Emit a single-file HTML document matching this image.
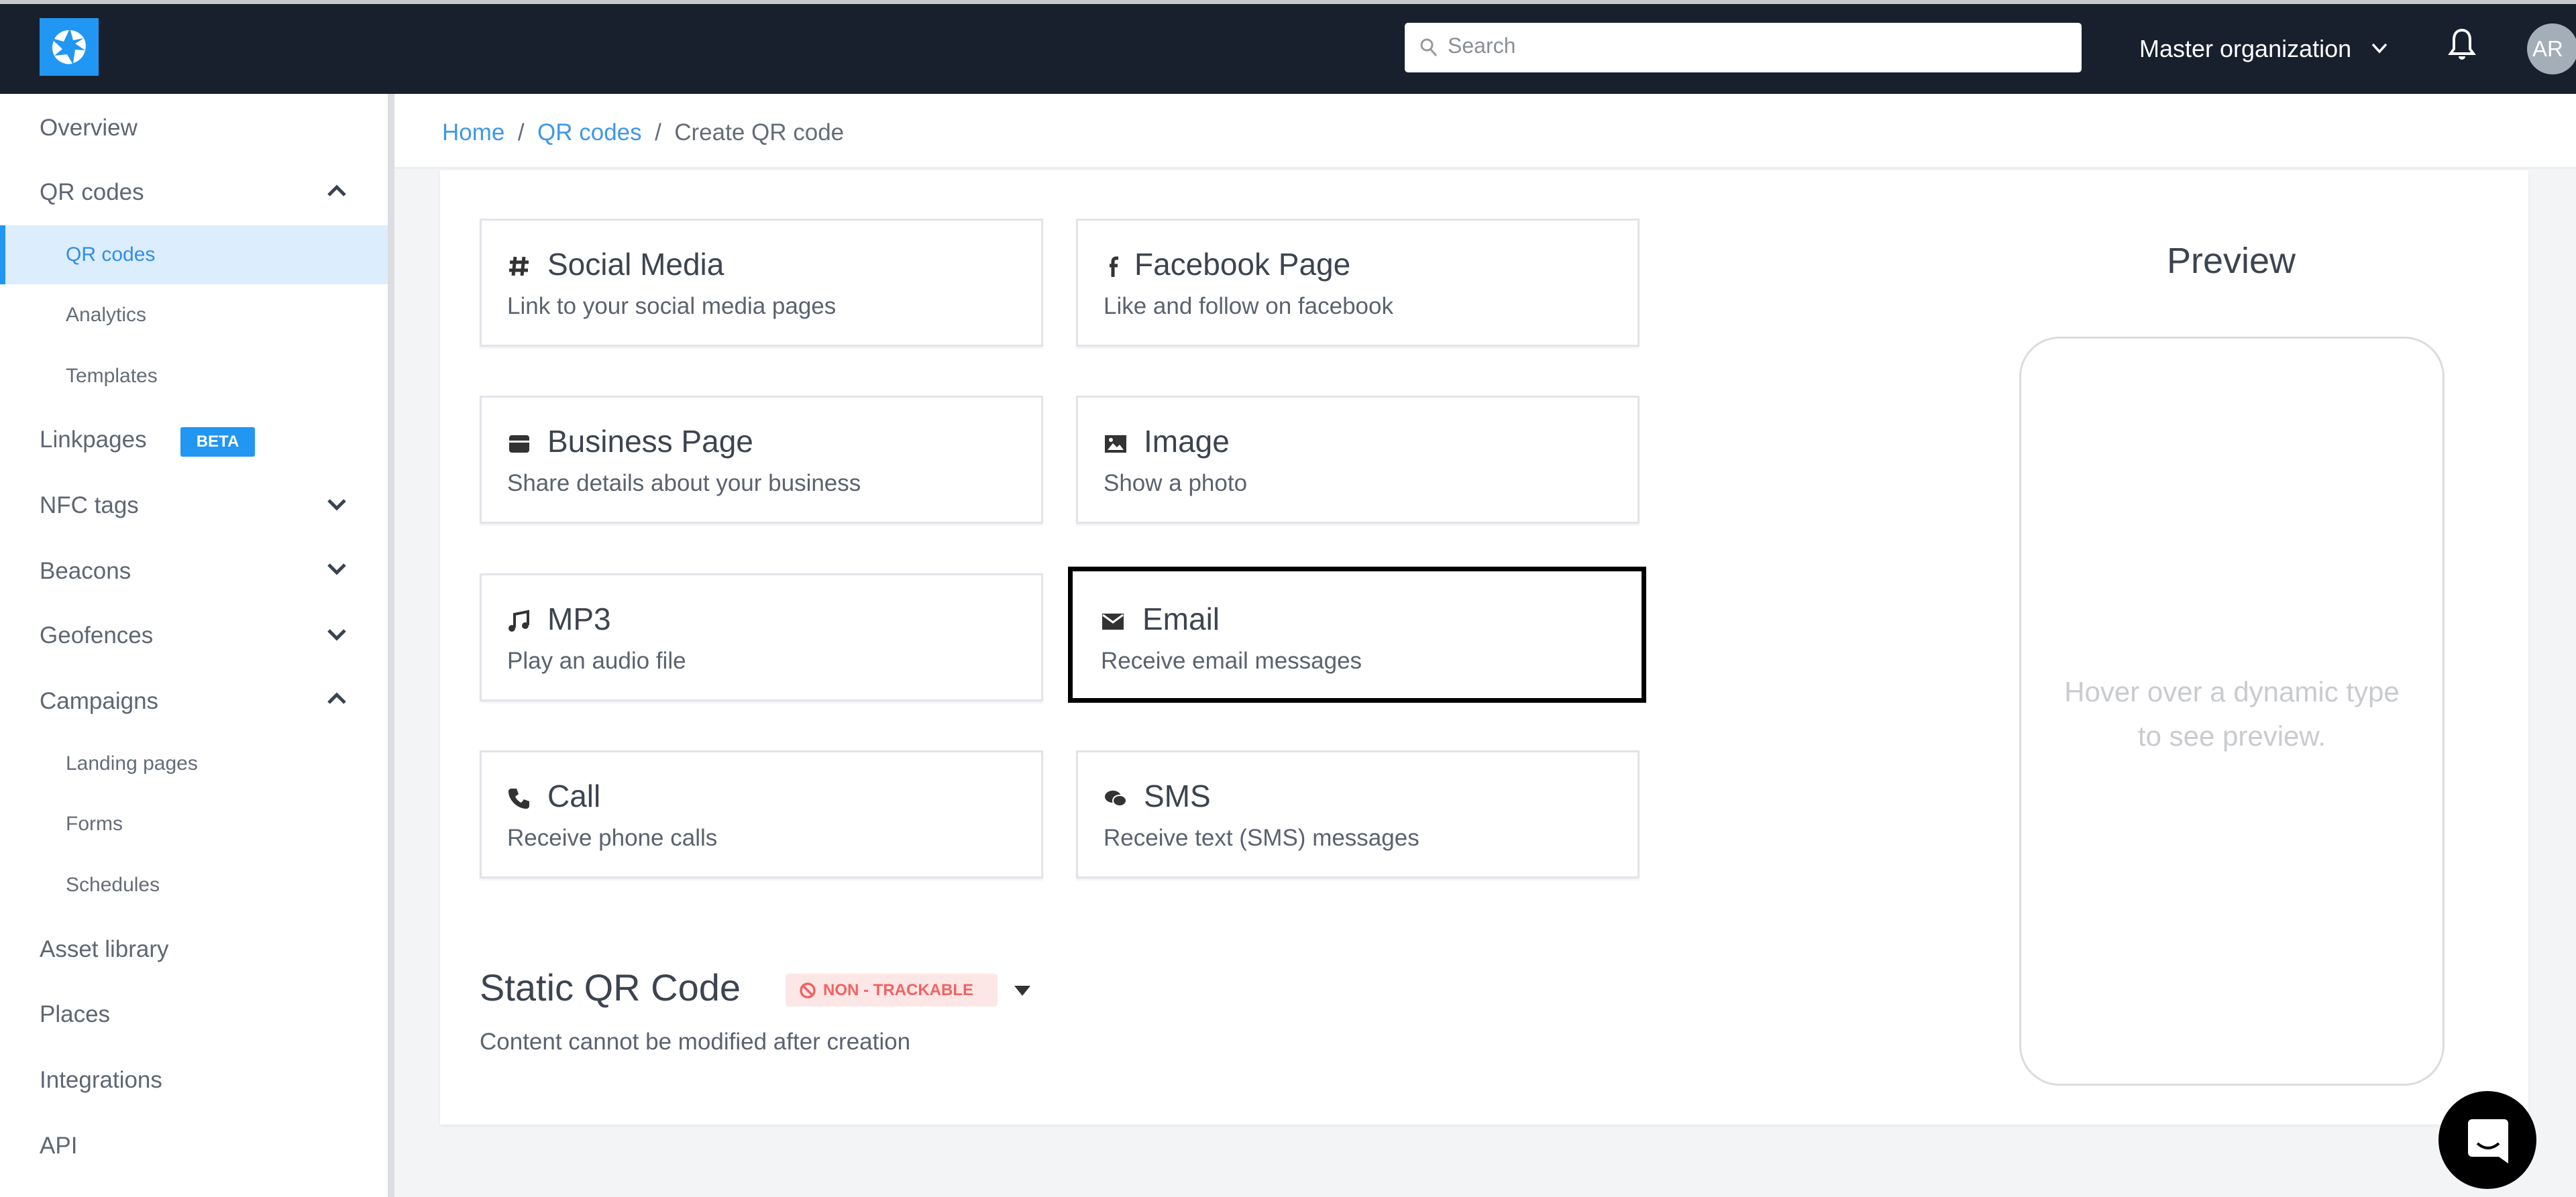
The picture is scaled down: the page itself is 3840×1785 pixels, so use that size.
<!DOCTYPE html>
<html><head><meta charset="utf-8">
<style>
*{box-sizing:border-box;margin:0;padding:0}
body{width:3840px;height:1785px;overflow:hidden;background:#f3f4f6;font-family:"Liberation Sans",sans-serif;position:relative;color:#3c4350}
.abs{position:absolute}
#top{left:0;top:0;width:3840px;height:140px;background:#18202e;border-top:6px solid #c8c9cc}
#logo{left:59px;top:27px;width:88px;height:86px;background:#2196f3}
#search{left:2094px;top:34px;width:1009px;height:74px;background:#fff;border-radius:5px}
#side{left:0;top:140px;width:588px;height:1645px;background:#fff;border-right:10px solid #dcdde0}
.si{position:absolute;left:59px;font-size:35px;color:#5f6672;line-height:40px}
.ss{position:absolute;left:98px;font-size:30px;color:#656c78;line-height:36px}
.chev{position:absolute;left:482px;width:40px;height:40px}
#crumb{left:588px;top:140px;width:3252px;height:112px;background:#fff;border-bottom:3px solid #eceef1}
#card{left:656px;top:254px;width:3113px;height:1423px;background:#fff;box-shadow:0 2px 4px rgba(0,0,0,.06)}
.tile{position:absolute;width:840px;height:191px;border:3px solid #e3e4ea;background:#fff;box-shadow:0 3px 3px rgba(0,0,0,.05)}
.tile .t{position:absolute;left:98px;top:38px;font-size:46px;color:#3d4450;line-height:54px}
.tile .d{position:absolute;left:38px;top:108px;font-size:35px;color:#5b626e;line-height:40px}
.tile svg{position:absolute;left:38px;top:50px;width:36px;height:36px}
</style></head><body>
<div id="top" class="abs"></div>
<div id="logo" class="abs"><svg width="88" height="86" viewBox="0 0 88 86"><g fill="#fff"><path d="M44 18a25 25 0 0 0-22 13l14 4 8-17z"/><path d="M66 30a25 25 0 0 0-20-12l4 15z"/><path d="M68 48a25 25 0 0 0-2-18l-13 8z"/><path d="M50 67a25 25 0 0 0 18-19l-15-1z"/><path d="M22 56a25 25 0 0 0 27 12l-8-14z"/><path d="M21 34a25 25 0 0 0 1 22l12-10z"/></g></svg></div>
<div id="search" class="abs"><svg class="abs" style="left:22px;top:22px" width="28" height="30" viewBox="0 0 28 30"><circle cx="11" cy="11" r="8" fill="none" stroke="#999" stroke-width="3"/><path d="M17 18l8 9" stroke="#999" stroke-width="3"/></svg><span class="abs" style="left:64px;top:16px;font-size:32px;color:#8a8f96">Search</span></div>
<div class="abs" style="left:3189px;top:52px;font-size:36px;color:#fff">Master organization</div>
<svg class="abs" style="left:3534px;top:62px" width="26" height="20" viewBox="0 0 26 20"><path d="M3 4l10 11 10-11" fill="none" stroke="#fff" stroke-width="3.5"/></svg>
<svg class="abs" style="left:3648px;top:40px" width="44" height="56" viewBox="0 0 44 56"><path d="M22 5c-8 0-12 6-12 14v14l-5 7h34l-5-7V19c0-8-4-14-12-14z" fill="none" stroke="#fff" stroke-width="4"/><path d="M17 44a5 5 0 0 0 10 0" fill="#fff"/></svg>
<div class="abs" style="left:3767px;top:35px;width:76px;height:76px;border-radius:50%;background:#a4aeb9;color:#fff;font-size:33px;line-height:76px;text-indent:8px">AR</div>

<div id="side" class="abs">
<div class="si" style="top:31px">Overview</div>
<div class="si" style="top:127px">QR codes</div>
<svg class="chev" style="top:125px" viewBox="0 0 40 40"><path d="M8 26l12-12 12 12" fill="none" stroke="#3b4452" stroke-width="5"/></svg>
<div class="abs" style="left:0;top:196px;width:578px;height:88px;background:#dcedfd;border-left:8px solid #2196f3"></div>
<div class="ss" style="top:222px;color:#2f8ee6">QR codes</div>
<div class="ss" style="top:312px">Analytics</div>
<div class="ss" style="top:403px">Templates</div>
<div class="si" style="top:496px">Linkpages</div>
<div class="abs" style="left:269px;top:497px;width:111px;height:44px;background:#2196f3;border-radius:3px;color:#fff;font-size:24px;font-weight:bold;line-height:44px;text-align:center">BETA</div>
<div class="si" style="top:594px">NFC tags</div>
<svg class="chev" style="top:592px" viewBox="0 0 40 40"><path d="M8 14l12 12 12-12" fill="none" stroke="#3b4452" stroke-width="5"/></svg>
<div class="si" style="top:692px">Beacons</div>
<svg class="chev" style="top:688px" viewBox="0 0 40 40"><path d="M8 14l12 12 12-12" fill="none" stroke="#3b4452" stroke-width="5"/></svg>
<div class="si" style="top:788px">Geofences</div>
<svg class="chev" style="top:786px" viewBox="0 0 40 40"><path d="M8 14l12 12 12-12" fill="none" stroke="#3b4452" stroke-width="5"/></svg>
<div class="si" style="top:886px">Campaigns</div>
<svg class="chev" style="top:882px" viewBox="0 0 40 40"><path d="M8 26l12-12 12 12" fill="none" stroke="#3b4452" stroke-width="5"/></svg>
<div class="ss" style="top:981px">Landing pages</div>
<div class="ss" style="top:1071px">Forms</div>
<div class="ss" style="top:1162px">Schedules</div>
<div class="si" style="top:1256px">Asset library</div>
<div class="si" style="top:1353px">Places</div>
<div class="si" style="top:1451px">Integrations</div>
<div class="si" style="top:1549px">API</div>
</div>

<div id="crumb" class="abs"><div class="abs" style="left:71px;top:38px;font-size:35px;color:#656c78"><span style="color:#3e97e8">Home</span> &nbsp;/&nbsp; <span style="color:#3e97e8">QR codes</span> &nbsp;/&nbsp; Create QR code</div></div>

<div id="card" class="abs">
<div class="tile" style="left:59px;top:72px"><svg viewBox="0 0 36 36"><path d="M12 4l-3 28M25 4l-3 28M4 12h28M3 24h28" stroke="#333" stroke-width="5"/></svg><div class="t">Social Media</div><div class="d">Link to your social media pages</div></div>
<div class="tile" style="left:948px;top:72px"><svg viewBox="0 0 36 36"><path d="M22 6h-3c-3 0-5 2-5 5v23M9 17h12" fill="none" stroke="#333" stroke-width="5"/></svg><div class="t" style="left:84px">Facebook Page</div><div class="d">Like and follow on facebook</div></div>
<div class="tile" style="left:59px;top:336px"><svg viewBox="0 0 36 36"><rect x="3" y="6" width="30" height="26" rx="4" fill="#333"/><rect x="3" y="14" width="30" height="3" fill="#fff"/></svg><div class="t">Business Page</div><div class="d">Share details about your business</div></div>
<div class="tile" style="left:948px;top:336px"><svg viewBox="0 0 36 36"><rect x="2" y="6" width="32" height="26" fill="#333"/><path d="M6 28l8-10 6 6 4-4 6 8z" fill="#fff"/><circle cx="11" cy="13" r="3" fill="#fff"/></svg><div class="t" style="left:98px">Image</div><div class="d">Show a photo</div></div>
<div class="tile" style="left:59px;top:601px"><svg viewBox="0 0 36 36"><path d="M11 28V8l20-4v20" fill="none" stroke="#333" stroke-width="4"/><circle cx="7" cy="29" r="5" fill="#333"/><circle cx="27" cy="25" r="5" fill="#333"/></svg><div class="t">MP3</div><div class="d">Play an audio file</div></div>
<div class="tile" style="left:936px;top:591px;width:862px;height:203px;border:7px solid #000;box-shadow:none"><svg viewBox="0 0 36 36" style="left:42px;top:56px"><rect x="2" y="7" width="32" height="24" fill="#333"/><path d="M3 9l15 11 15-11" fill="none" stroke="#fff" stroke-width="3"/></svg><div class="t" style="left:104px;top:44px">Email</div><div class="d" style="left:42px;top:114px">Receive email messages</div></div>
<div class="tile" style="left:59px;top:865px"><svg viewBox="0 0 36 36"><path d="M6 4l8 0 3 8-5 4c2 4 5 7 9 9l4-5 8 3v7c0 2-2 4-4 4C15 34 2 21 2 8c0-2 2-4 4-4z" fill="#333"/></svg><div class="t">Call</div><div class="d">Receive phone calls</div></div>
<div class="tile" style="left:948px;top:865px"><svg viewBox="0 0 36 36"><ellipse cx="14" cy="16" rx="12" ry="9" fill="#333"/><ellipse cx="24" cy="22" rx="10" ry="8" fill="#333" stroke="#fff" stroke-width="2"/></svg><div class="t" style="left:98px">SMS</div><div class="d">Receive text (SMS) messages</div></div>

<div class="abs" style="left:59px;top:1186px;font-size:56px;color:#3d4450">Static QR Code</div>
<div class="abs" style="left:515px;top:1198px;width:316px;height:49px;background:#fde6e6;border-radius:5px;color:#f06363;font-size:24px;font-weight:bold;line-height:49px;padding-left:56px">NON - TRACKABLE<svg class="abs" style="left:20px;top:12px" width="26" height="26" viewBox="0 0 26 26"><circle cx="13" cy="13" r="10" fill="none" stroke="#f06363" stroke-width="3.5"/><path d="M6 6l14 14" stroke="#f06363" stroke-width="3.5"/></svg></div>
<svg class="abs" style="left:854px;top:1214px" width="28" height="20" viewBox="0 0 28 20"><path d="M2 2h24L14 17z" fill="#333"/></svg>
<div class="abs" style="left:59px;top:1280px;font-size:35px;color:#5b626e">Content cannot be modified after creation</div>

<div class="abs" style="left:2500px;top:104px;width:340px;text-align:center;font-size:54px;color:#3d4450">Preview</div>
<div class="abs" style="left:2354px;top:248px;width:634px;height:1117px;border:3px solid #dcdcdc;border-radius:60px"></div>
<div class="abs" style="left:2354px;top:745px;width:634px;text-align:center;font-size:42px;line-height:66px;color:#c9cbcf">Hover over a dynamic type<br>to see preview.</div>
</div>

<div class="abs" style="left:3635px;top:1627px;width:146px;height:146px;border-radius:50%;background:#000"><svg class="abs" style="left:42px;top:40px" width="64" height="72" viewBox="0 0 64 72"><path d="M8 2h48a6 6 0 0 1 6 6v60l-14-10H8a6 6 0 0 1-6-6V8a6 6 0 0 1 6-6z" fill="#fff"/><path d="M16 38q16 14 32 0" fill="none" stroke="#000" stroke-width="4"/></svg></div>
</body></html>
